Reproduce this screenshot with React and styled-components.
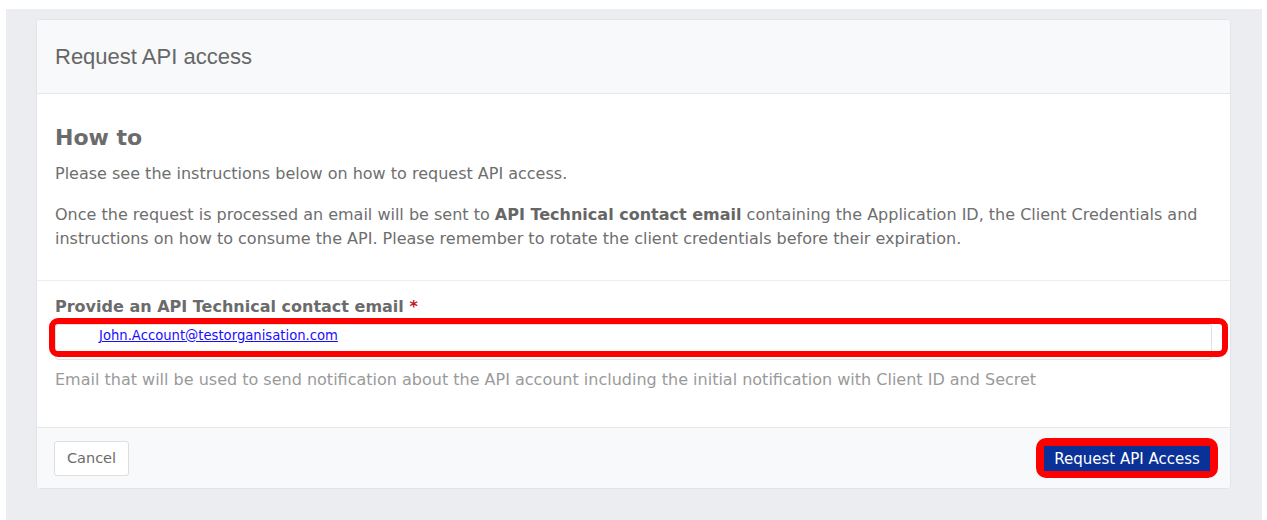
import React from "react";
import styled, { createGlobalStyle } from "styled-components";

const GlobalStyle = createGlobalStyle`
  html, body {
    margin: 0;
    padding: 0;
    background: #ffffff;
  }
  body {
    font-family: "DejaVu Sans", Verdana, sans-serif;
    color: #666666;
  }
  * { box-sizing: border-box; }
`;

const Page = styled.div`
  margin: 9px 5px 0 6px;
  padding: 10px 31px 40px 30px;
  background: #ecedf1;
  min-height: 520px;
`;

const Card = styled.section`
  background: #ffffff;
  border: 1px solid #e2e4e8;
  border-radius: 4px;
  overflow: hidden;
`;

const CardHeader = styled.header`
  height: 74px;
  display: flex;
  align-items: center;
  padding: 0 18px;
  background: #f8f9fa;
  border-bottom: 1px solid #e5e7eb;
`;

const CardTitle = styled.h1`
  margin: 0;
  font-family: "Liberation Sans", Arial, sans-serif;
  font-weight: 400;
  font-size: 22px;
  color: #666666;
`;

const Section = styled.div`
  padding: ${(p) => p.$pad};
  border-bottom: ${(p) => (p.$divided ? "1px solid #eceef1" : "none")};
`;

const Heading = styled.h2`
  margin: 0 0 11px;
  font-size: 22px;
  line-height: 26px;
  font-weight: 700;
  color: #6b6b6b;
`;

const Paragraph = styled.p`
  margin: 0 0 ${(p) => p.$gap || 0}px;
  font-size: 16px;
  line-height: 24px;
  color: #6e6e6e;
  strong {
    font-weight: 700;
    color: #666666;
  }
`;

const Label = styled.div`
  font-size: 16px;
  line-height: 20px;
  font-weight: 700;
  color: #6b6b6b;
  margin-bottom: 7px;
`;

const Required = styled.span`
  color: #c4161c;
`;

const FieldWrap = styled.div`
  position: relative;
`;

const InputBox = styled.div`
  height: 36px;
  border: 1px solid #dfe1e5;
  border-radius: 3px;
  background: #ffffff;
  padding: 0 0 0 43px;
  line-height: 20px;
`;

const EmailLink = styled.a`
  font-size: 13.2px;
  line-height: 20px;
  color: #1a0dff;
  text-decoration: underline;
`;

/* red call-out drawn over the field */
const Callout = styled.span`
  position: absolute;
  left: -6px;
  right: -16px;
  top: -6px;
  bottom: 3px;
  border: 6px solid #ff0000;
  border-radius: 9px;
  pointer-events: none;
`;

const HelpText = styled.p`
  margin: 10px 0 0;
  font-size: 16px;
  line-height: 20px;
  color: #9a9a9a;
`;

const CardFooter = styled.footer`
  display: flex;
  align-items: center;
  justify-content: space-between;
  padding: 10px 12px 10px 17px;
  background: #f8f9fa;
  border-top: 1px solid #e5e7eb;
`;

const SecondaryButton = styled.button`
  height: 35px;
  width: 75px;
  padding: 0;
  font-family: "DejaVu Sans", Verdana, sans-serif;
  font-size: 14.5px;
  color: #6b6b6b;
  background: #ffffff;
  border: 1px solid #dcdee2;
  border-radius: 3px;
`;

const Highlight = styled.span`
  display: inline-flex;
  border: 8px solid #ff0000;
  border-bottom-width: 7px;
  border-radius: 10px;
  background: #ff0000;
`;

const PrimaryButton = styled.button`
  height: 25px;
  width: 166px;
  padding: 0;
  font-family: "DejaVu Sans", Verdana, sans-serif;
  font-size: 15px;
  color: #ffffff;
  background: #0a3197;
  border: none;
  border-radius: 0;
`;

export default function App() {
  return (
    <>
      <GlobalStyle />
      <Page>
        <Card>
          <CardHeader>
            <CardTitle>Request API access</CardTitle>
          </CardHeader>
          <Section $pad="31px 18px 29px" $divided>
            <Heading>How to</Heading>
            <Paragraph $gap={17}>
              Please see the instructions below on how to request API access.
            </Paragraph>
            <Paragraph>
              Once the request is processed an email will be sent to{" "}
              <strong>API Technical contact email</strong> containing the
              Application ID, the Client Credentials and instructions on how to
              consume the API. Please remember to rotate the client credentials
              before their expiration.
            </Paragraph>
          </Section>
          <Section $pad="16px 18px 37px">
            <Label>
              Provide an API Technical contact email <Required>*</Required>
            </Label>
            <FieldWrap>
              <InputBox>
                <EmailLink href="#">John.Account@testorganisation.com</EmailLink>
              </InputBox>
              <Callout />
            </FieldWrap>
            <HelpText>
              Email that will be used to send notification about the API account
              including the initial notification with Client ID and Secret
            </HelpText>
          </Section>
          <CardFooter>
            <SecondaryButton>Cancel</SecondaryButton>
            <Highlight>
              <PrimaryButton>Request API Access</PrimaryButton>
            </Highlight>
          </CardFooter>
        </Card>
      </Page>
    </>
  );
}
